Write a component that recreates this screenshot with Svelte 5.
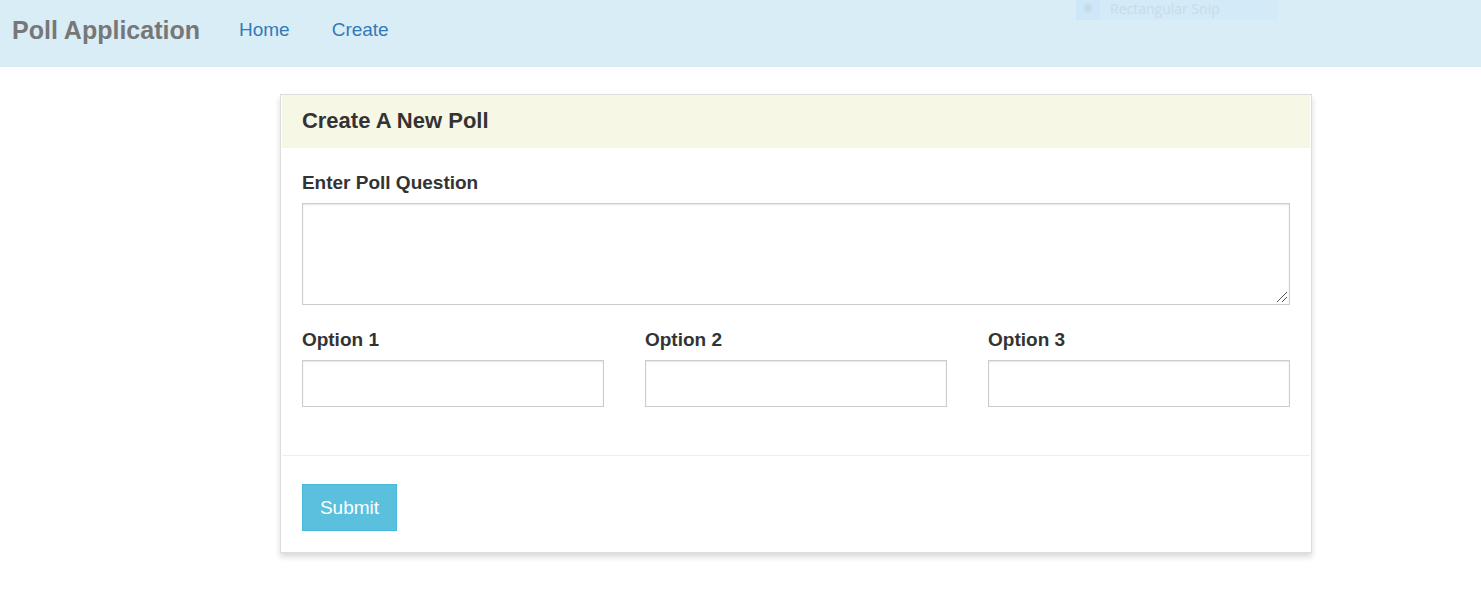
<script>
  const links = ['Home', 'Create'];
  let question = $state('');
  let options = $state(['', '', '']);
</script>

<nav class="navbar">
  <a class="brand" href="#home">Poll Application</a>
  <div class="links">
    {#each links as link}
      <a href="#{link.toLowerCase()}">{link}</a>
    {/each}
  </div>
  <div class="snip">
    <span class="marker"><span class="dot"></span></span>
    <span class="snip-text">Rectangular Snip</span>
  </div>
</nav>

<main>
  <form class="panel" onsubmit={(event) => event.preventDefault()}>
    <h1>Create A New Poll</h1>
    <div class="fields">
      <label for="question">Enter Poll Question</label>
      <textarea id="question" bind:value={question}></textarea>
      <div class="options">
        {#each options as _, i}
          <div class="option">
            <label for="option-{i}">Option {i + 1}</label>
            <input id="option-{i}" type="text" bind:value={options[i]} />
          </div>
        {/each}
      </div>
    </div>
    <div class="actions">
      <button type="submit">Submit</button>
    </div>
  </form>
</main>

<style>
  :global(body) {
    background: #fff;
    color: #333;
    font-family: "Liberation Sans", Arial, sans-serif;
    font-size: 19px;
    line-height: 26px;
  }

  :global(*) {
    box-sizing: border-box;
  }

  .navbar {
    position: relative;
    display: flex;
    align-items: center;
    gap: 39px;
    padding: 17px 12px 24px;
    background: #d9edf7;
  }

  a {
    color: #337ab7;
    text-decoration: none;
  }

  .brand {
    color: #777;
    font-size: 25px;
    font-weight: 700;
  }

  .links {
    display: flex;
    gap: 42px;
  }

  .snip {
    position: absolute;
    top: 0;
    right: 203px;
    display: flex;
    width: 202px;
    height: 20px;
    background: #d3eaf8;
    color: #c7dce8;
    font-family: "Open Sans", sans-serif;
    font-size: 14px;
    line-height: 18px;
  }

  .marker {
    display: flex;
    justify-content: center;
    width: 24px;
    padding-top: 4px;
    background: #cde6f8;
  }

  .dot {
    width: 8px;
    height: 8px;
    border-radius: 50%;
    background: #c7dce8;
  }

  .snip-text {
    padding-left: 10px;
  }

  main {
    padding: 27px 11.4% 40px 18.9%;
  }

  .panel {
    padding: 0 1px;
    border: 1px solid #ddd;
    box-shadow: 0 4px 6px rgba(0, 0, 0, 0.15);
  }

  h1 {
    margin: 0;
    padding: 13px 20px;
    border-bottom: 1px solid #f4f6df;
    background: #f7f7e6;
    font-size: 22px;
    line-height: 26px;
  }

  .fields {
    padding: 22px 20px 48px;
    border-bottom: 1px solid #eee;
  }

  label {
    display: block;
    margin-bottom: 7px;
    font-size: 19px;
    font-weight: 700;
  }

  textarea,
  input {
    display: block;
    width: 100%;
    margin: 0;
    padding: 8px 16px;
    border: 1px solid #ccc;
    border-radius: 0;
    background: #fff;
    box-shadow: inset 0 1px 2px rgba(0, 0, 0, 0.1);
    color: #555;
    font: inherit;
  }

  textarea {
    height: 102px;
    resize: vertical;
  }

  textarea::-webkit-resizer {
    background: url("data:image/svg+xml,%3Csvg xmlns='http://www.w3.org/2000/svg' width='15' height='15'%3E%3Cpath d='M3 13L13 3M8 13L13 8' stroke='%23555' fill='none'/%3E%3C/svg%3E") no-repeat right bottom;
  }

  input {
    height: 47px;
  }

  .options {
    display: grid;
    grid-template-columns: repeat(3, 1fr);
    gap: 41px;
    margin-top: 22px;
  }

  .actions {
    padding: 28px 20px 21px;
  }

  button {
    display: block;
    height: 47px;
    padding: 0 17px;
    border: 1px solid #46b8da;
    border-radius: 0;
    background: #5bc0de;
    color: #fff;
    font: inherit;
  }
</style>
